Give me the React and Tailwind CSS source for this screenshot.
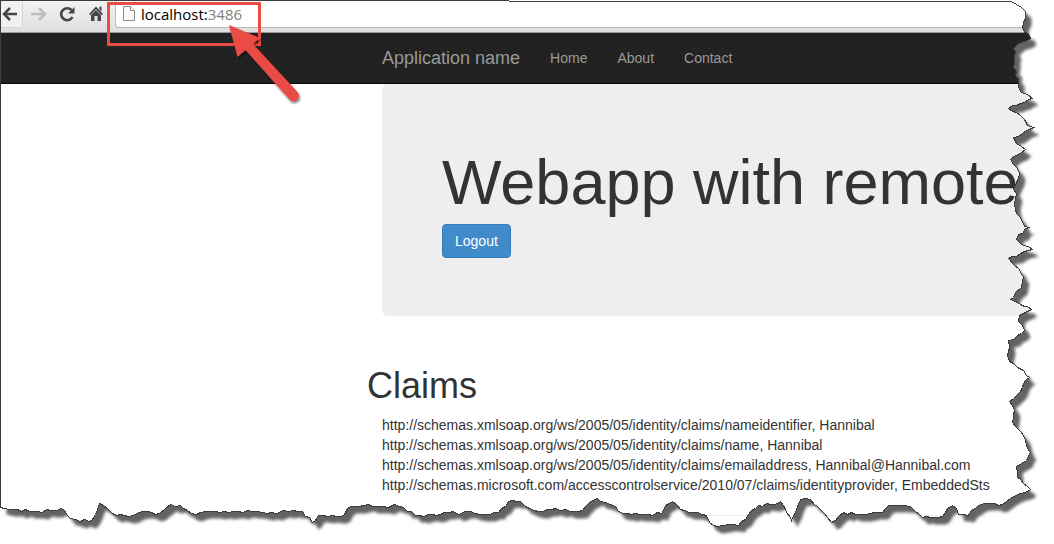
import React from "react";

const EDGE = [
  [1011,1],[1016,4],[1021,7],[1025,11],[1025,18],[1023,22],[1022,27],[1024,32],[1028,33],[1030,38],[1020,42],[1013,48],[1015,52],[1014,55],[1014,62],[1013,67],[1016,71],[1015,75],[1018,79],[1018,87],[1021,92],[1027,94],[1032,98],[1020,103],[1008,108],[1012,111],[1020,115],[1024,119],[1027,125],[1033,127],[1022,133],[1013,137],
  [1016,143],[1025,149],[1015,155],[1010,159],[1013,164],[1017,168],[1019,173],[1016,182],[1013,189],[1016,193],[1014,203],[1016,213],[1022,221],[1024,226],[1029,227],[1018,234],[1016,239],[1023,245],[1032,249],[1020,253],[1008,258],
  [1013,264],[1019,269],[1023,276],[1021,287],[1015,292],[1010,299],[1020,304],[1031,309],[1025,312],[1019,315],[1018,321],[1022,325],[1024,330],[1017,335],[1008,340],[1009,347],[1007,355],[1009,361],[1017,367],[1023,370],[1029,377],[1023,383],[1020,391],
  [1009,401],[1014,410],[1012,422],[1020,431],[1025,440],[1026,445],[1030,452],[1026,460],[1016,466],[1017,477],[1023,483],[1030,489],[1020,493],[1010,498],[1002,504],[990,503],[980,504],[971,510],[968,515],[958,514],[956,508],[952,505],[947,508],
  [942,516],[930,517],[922,517],[915,511],[910,506],[903,505],[892,505],[888,505],[882,512],[870,513],[855,514],[843,512],[838,516],[831,522],[827,517],[817,506],[810,499],[800,499],[797,506],[791,520],[785,509],[780,501],[770,504],[758,505],
  [748,514],[738,525],[728,524],[717,526],[709,522],[706,515],[693,512],[680,509],[672,501],[665,505],[661,513],[643,514],[627,513],[618,511],[615,506],[600,501],[597,498],[590,501],[582,510],[570,511],[555,508],[538,511],[525,506],[520,501],[508,501],
  [498,512],[480,514],[465,511],[458,514],[453,511],[440,514],[415,515],[403,507],[394,504],[388,507],[377,506],[363,505],[350,506],[341,516],[318,515],[312,522],[302,511],[283,510],[276,513],[257,511],
  [247,510],[228,512],[215,511],[200,512],[191,513],[183,508],[180,505],[170,504],[165,508],[159,513],[143,511],[128,516],[112,513],[107,508],[99,503],[95,514],[89,521],[70,518],[61,508],[50,510],[33,511],[13,509],[0,507],
];

// Subdivides long runs of the edge and nudges the new points so the tear looks ragged.
function roughen(points) {
  const out = [];
  points.forEach(([x, y], i) => {
    out.push([x, y]);
    const next = points[i + 1];
    if (!next) return;
    const steps = Math.floor(Math.hypot(next[0] - x, next[1] - y) / 4);
    for (let s = 1; s < steps; s++) {
      const t = s / steps;
      const n = ((i * 7 + s * 5) % 3) - 1;
      out.push([Math.round(x + (next[0] - x) * t), Math.round(y + (next[1] - y) * t) + n]);
    }
  });
  return out;
}

const SHAPE = "M0.5 0.5L" + roughen(EDGE).map(([x, y]) => `${x + 0.5} ${y + 0.5}`).join("L") + "Z";

function TornEdge() {
  return (
    <svg className="pointer-events-none absolute inset-0 h-full w-full" viewBox="0 0 1054 544" preserveAspectRatio="none" aria-hidden="true">
      <defs>
        <mask id="outside" maskUnits="userSpaceOnUse" x="0" y="0" width="1054" height="544">
          <rect width="1054" height="544" fill="white" />
          <path d={SHAPE} fill="black" />
        </mask>
        <filter id="soft" filterUnits="userSpaceOnUse" x="-20" y="-20" width="1100" height="600">
          <feGaussianBlur stdDeviation="1.8" />
        </filter>
      </defs>
      <g mask="url(#outside)">
        <rect width="1054" height="544" fill="white" />
        <path d={SHAPE} transform="translate(6 7)" fill="#646464" filter="url(#soft)" />
      </g>
      <path d={SHAPE} fill="none" stroke="#3c3c3c" strokeWidth="1" shapeRendering="crispEdges" />
    </svg>
  );
}

function Callout() {
  return (
    <svg className="pointer-events-none absolute top-0 left-0 h-[110px] w-[310px]" viewBox="0 0 310 110" aria-hidden="true">
      <defs>
        <filter id="drop" x="-20%" y="-20%" width="150%" height="150%">
          <feDropShadow dx="1" dy="2" stdDeviation="1.3" floodColor="#000" floodOpacity="0.5" />
        </filter>
      </defs>
      <rect x="108.500" y="3.500" width="151" height="41" fill="none" stroke="#ea4b45" strokeWidth="3" />
      <path d="M229 25L260 38L253 44L297.500 92A5.300 5.300 0 0 1 289.500 99.500L245.500 50L237.500 57Z" fill="#ea4b45" filter="url(#drop)" />
    </svg>
  );
}

function BrowserBar() {
  return (
    <div className="flex h-[33px] items-start border-b border-[#999] bg-linear-to-b from-[#f3f3f3] to-[#dedede]">
      <button type="button" aria-label="Back" className="flex h-7 w-[23px] items-center rounded-r-sm border-r border-b border-[#d6d6d6] bg-[#f1f1f1] pl-0.5">
        <svg width="16" height="16" viewBox="0 0 16 16" fill="none" stroke="#464646" strokeWidth="2.500"><path d="M15 8H2M8 2L2 8L8 14" /></svg>
      </button>
      <button type="button" aria-label="Forward" className="ml-2 flex h-7 w-4 items-center">
        <svg width="16" height="16" viewBox="0 0 16 16" fill="none" stroke="#bdbdbd" strokeWidth="2.500"><path d="M0 8H13M8 2L14 8L8 14" /></svg>
      </button>
      <button type="button" aria-label="Reload" className="ml-3 flex h-7 w-4 items-center">
        <svg width="16" height="16" viewBox="0 0 16 16"><path d="M12.500 4A6 6 0 1 0 13.500 11" fill="none" stroke="#464646" strokeWidth="2.600" /><path d="M15.500 1V7.500H9Z" fill="#464646" /></svg>
      </button>
      <button type="button" aria-label="Home" className="ml-3.5 flex h-7 w-4 items-center">
        <svg width="16" height="16" viewBox="0 0 16 16" fill="#464646"><path d="M7 0.500L14 8L12.800 9.200L7 3.200L1.200 9.200L0 8Z" /><path d="M10.500 0.500H12.500V5.500L10.500 3.500Z" /><path d="M2 9L7 4L12 9V15H8.500V10H5.500V15H2Z" /></svg>
      </button>
      <div className="ml-2.5 flex h-7 min-w-0 flex-1 items-center rounded-l-sm border-b border-l border-[#b9b9b9] bg-white pl-[7px]">
        <svg width="12" height="16" viewBox="0 0 12 16" fill="#fafafa" stroke="#8c8c8c" aria-hidden="true"><path d="M0.500 0.500H7.500L11.500 4.500V14.500H0.500Z" /><path d="M7.500 0.500V4.500H11.500" /></svg>
        <p className="pl-1.5 font-['Open_Sans',sans-serif] text-[15px] leading-5 text-black">localhost:<span className="text-[#808080]">3486</span></p>
      </div>
    </div>
  );
}

const CLAIMS = [
  "http://schemas.xmlsoap.org/ws/2005/05/identity/claims/nameidentifier, Hannibal",
  "http://schemas.xmlsoap.org/ws/2005/05/identity/claims/name, Hannibal",
  "http://schemas.xmlsoap.org/ws/2005/05/identity/claims/emailaddress, Hannibal@Hannibal.com",
  "http://schemas.microsoft.com/accesscontrolservice/2010/07/claims/identityprovider, EmbeddedSts",
];

export default function App() {
  return (
    <div className="relative overflow-hidden bg-white font-['Liberation_Sans',Arial,sans-serif] text-sm leading-5 text-[#333]">
      <BrowserBar />
      <nav className="flex h-[51px] items-center gap-[30px] border-b border-[#080808] bg-[#222] pl-[382px] text-[#999]">
        <a href="#" className="text-lg leading-5 whitespace-nowrap">Application name</a>
        <a href="#home">Home</a>
        <a href="#about">About</a>
        <a href="#contact">Contact</a>
      </nav>
      <main className="pb-7 pl-[367px]">
        <section className="ml-[15px] rounded-md bg-[#eee] px-[60px] pt-[67px] pb-[58px]">
          <h1 className="mb-2.5 text-[63px] leading-[63px] whitespace-nowrap">Webapp with remote</h1>
          <button type="button" className="block h-[34px] rounded border border-[#357ebd] bg-[#428bca] px-3 text-white">Logout</button>
        </section>
        <h2 className="mt-[50px] text-4xl leading-10">Claims</h2>
        <ul className="mt-[9px] pl-[15px] whitespace-nowrap">
          {CLAIMS.map((claim) => <li key={claim}>{claim}</li>)}
        </ul>
        <hr className="mt-5 ml-[15px] border-[#eee]" />
      </main>
      <TornEdge />
      <Callout />
    </div>
  );
}
